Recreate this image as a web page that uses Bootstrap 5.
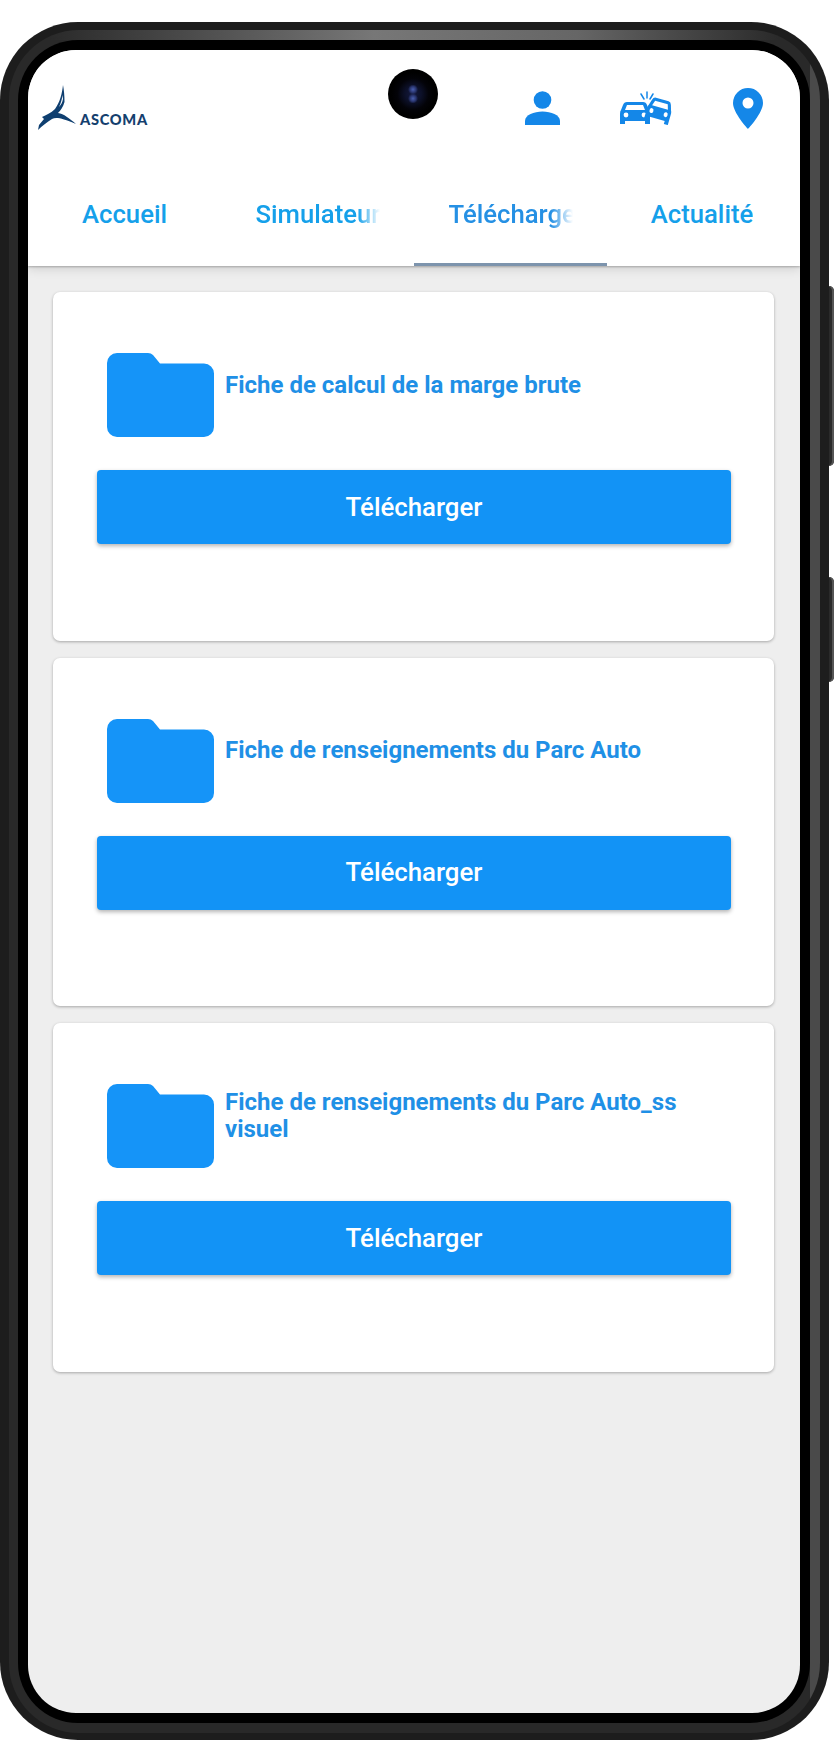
<!DOCTYPE html>
<html lang="fr">
<head>
    <meta charset="UTF-8">
    <meta name="viewport" content="width=device-width, initial-scale=1.0">
    <title>Ascoma - Téléchargements</title>
    <link href="https://cdn.jsdelivr.net/npm/bootstrap@5.3.2/dist/css/bootstrap.min.css" rel="stylesheet">
    <style>
        body { background: #fff; font-family: Roboto, "Liberation Sans", sans-serif; padding-top: 22px; }

        /* phone frame */
        .phone-shell { position: relative; width: 829px; height: 1718px; background: #1d1d1d; border-radius: 78px; padding: 8px 9px 7px 9px; }
        .phone-rim { height: 100%; border-radius: 70px; padding: 10px 10px 10px 9px;
            background: linear-gradient(90deg, #2a2a2a 5%, #777 45%, #666 70%, #2a2a2a 95%) top / 100% 10px no-repeat,
                        linear-gradient(180deg, #4a4a4a, #4a4a4a) right / 10px 100% no-repeat, #292929; }
        .phone-bezel { height: 100%; background: #000; border-radius: 60px; padding: 10px; }
        .phone-screen { height: 100%; background: #eee; border-radius: 48px; overflow: hidden; }
        .side-key { position: absolute; right: -5px; width: 5px; background: #2a2a2a; border-radius: 0 6px 6px 0; box-shadow: inset -2px 0 0 #555; }
        .key-power { top: 264px; height: 180px; }
        .key-volume { top: 555px; height: 105px; }
        .camera { position: absolute; left: 388px; top: 47px; width: 50px; height: 50px; border-radius: 50%;
            background: radial-gradient(circle at 50% 41%, #4a5fb0 0, #2a3670 3px, transparent 5px),
                        radial-gradient(circle at 50% 59%, #4a5fb0 0, #2a3670 3px, transparent 5px),
                        radial-gradient(circle, #141a40 0, #0c1028 24%, #030308 44%, #000 62%); }

        /* header */
        .app-header { position: relative; background: #fff; box-shadow: 0 1px 2px rgba(0, 0, 0, .25), 0 3px 10px rgba(0, 0, 0, .12); }
        .top-row { height: 116px; padding: 0 37px 0 10px; }
        .brand-name { font-family: Lato, "Liberation Sans", sans-serif; font-weight: 900; font-size: 14.6px; letter-spacing: .7px; color: #14406e; margin: 24px 0 0 2px; line-height: 1; }
        .tab-row { height: 100px; }
        .tab-item { flex: 1 1 0; height: 100%; padding-bottom: 2px; border-bottom: 3px solid transparent; color: #15a0ea; font-size: 25.7px; font-weight: 500; text-decoration: none; }
        .tab-item.is-current { color: #2590e4; border-bottom-color: #7d94ad; }
        .tab-label { display: inline-block; max-width: 124px; overflow: hidden; white-space: nowrap; line-height: 36px; }
        .tab-label.is-cut { -webkit-mask-image: linear-gradient(90deg, #000 82%, transparent 100%); mask-image: linear-gradient(90deg, #000 82%, transparent 100%); }
        .tab-item:last-child .tab-label { margin-right: 3px; }

        /* download cards */
        .doc-list { padding: 26px 26px 0 25px; gap: 17px; }
        .doc-card { height: 348.5px; border: 0; border-radius: 7px; box-shadow: 0 1px 3px rgba(0, 0, 0, .3); padding: 61px 43px 0 44px; }
        .doc-head { padding-left: 10px; gap: 11px; }
        .doc-folder { flex: none; display: block; }
        .doc-title { color: #1f90e6; font-size: 24px; font-weight: 700; line-height: 27px; margin: 0 30px 20px 0; }
        .doc-btn { width: 100%; height: 74px; margin-top: 33px; background: #1293f6; border: 0; border-radius: 4px; color: #fff; font-size: 25.8px; font-weight: 500; box-shadow: 0 2px 4px rgba(0, 0, 0, .3); }
        .doc-btn:hover { background: #1293f6; color: #fff; }
    </style>
</head>
<body>
    <svg width="0" height="0" class="position-absolute">
        <defs>
            <symbol id="folder" viewBox="0 0 107 84">
                <path fill="#1594f8" d="M10 0H41Q44 0 46 2L53 10.5H97A10 10 0 0 1 107 20.5V74A10 10 0 0 1 97 84H10A10 10 0 0 1 0 74V10A10 10 0 0 1 10 0Z"/>
            </symbol>
            <g id="car">
                <path fill="#1487e8" fill-rule="evenodd" d="M7 0H23Q26 0 27 3L29 8Q30 9 30 12V22H25V19H5V22H0V12Q0 9 1 8L3 3Q4 0 7 0ZM7 3 5 8H25L23 3Z"/>
                <circle cx="6" cy="13" r="2.4" fill="#fff"/>
                <circle cx="24" cy="13" r="2.4" fill="#fff"/>
            </g>
        </defs>
    </svg>

    <div class="phone-shell">
        <div class="phone-rim">
            <div class="phone-bezel">
                <div class="phone-screen d-flex flex-column">

                    <header class="app-header">
                        <div class="top-row d-flex align-items-center">
                            <div class="d-flex align-items-center">
                                <svg width="40" height="46" viewBox="0 0 40 46">
                                    <path fill="#0f3f70" fill-rule="evenodd" d="M25 0C24 9 22 17 17 24C13 28 8 30 4 32L6 34L1 40L0 45C4 41 9 37 14 34C18 32 24 33 38 39C31 33 26 29 20 28C23 25 25 22 26.500 17C26.500 11 26 5 25 0ZM24.500 10C24 14 23 18 21 22C23 20 24.500 17 25 14Z"/>
                                </svg>
                                <span class="brand-name">ASCOMA</span>
                            </div>
                            <div class="d-flex align-items-center ms-auto" style="gap:60px">
                                <svg width="35" height="34" viewBox="0 0 35 34">
                                    <circle cx="17.5" cy="9" r="8.8" fill="#1487e8"/>
                                    <path fill="#1487e8" d="M0 34V30C0 24 9 20.500 17.500 20.500S35 24 35 30V34Z"/>
                                </svg>
                                <svg width="53" height="34" viewBox="0 0 53 34">
                                    <use href="#car" x="0" y="11"/>
                                    <use href="#car" transform="translate(27 8) rotate(16 12 11) scale(.82 1.05)"/>
                                    <path stroke="#1487e8" stroke-width="1.500" stroke-linecap="round" d="M27 1V7M21 3 24 8M33 3 30 8"/>
                                </svg>
                                <svg width="30" height="41" viewBox="0 0 30 41">
                                    <path fill="#1487e8" fill-rule="evenodd" d="M15 0A15 15 0 0 1 30 15C30 25 15 41 15 41S0 25 0 15A15 15 0 0 1 15 0ZM15 9.500A5.500 5.500 0 1 0 15 20.500A5.500 5.500 0 0 0 15 9.500Z"/>
                                </svg>
                            </div>
                        </div>
                        <nav class="nav tab-row flex-nowrap">
                            <a class="tab-item d-flex align-items-center justify-content-center" href="#"><span class="tab-label">Accueil</span></a>
                            <a class="tab-item d-flex align-items-center justify-content-center" href="#"><span class="tab-label is-cut">Simulateur</span></a>
                            <a class="tab-item is-current d-flex align-items-center justify-content-center" href="#"><span class="tab-label is-cut">Télécharger</span></a>
                            <a class="tab-item d-flex align-items-center justify-content-center" href="#"><span class="tab-label">Actualité</span></a>
                        </nav>
                    </header>

                    <main class="doc-list d-flex flex-column">
                        <div class="card doc-card">
                            <div class="doc-head d-flex align-items-center">
                                <svg class="doc-folder" width="107" height="84"><use href="#folder"/></svg>
                                <p class="doc-title">Fiche de calcul de la marge brute</p>
                            </div>
                            <button type="button" class="btn doc-btn">Télécharger</button>
                        </div>
                        <div class="card doc-card">
                            <div class="doc-head d-flex align-items-center">
                                <svg class="doc-folder" width="107" height="84"><use href="#folder"/></svg>
                                <p class="doc-title">Fiche de renseignements du Parc Auto</p>
                            </div>
                            <button type="button" class="btn doc-btn">Télécharger</button>
                        </div>
                        <div class="card doc-card">
                            <div class="doc-head d-flex align-items-center">
                                <svg class="doc-folder" width="107" height="84"><use href="#folder"/></svg>
                                <p class="doc-title">Fiche de renseignements du Parc Auto_ss visuel</p>
                            </div>
                            <button type="button" class="btn doc-btn">Télécharger</button>
                        </div>
                    </main>

                </div>
            </div>
        </div>
        <span class="side-key key-power"></span>
        <span class="side-key key-volume"></span>
        <span class="camera"></span>
    </div>

    <script src="https://cdn.jsdelivr.net/npm/bootstrap@5.3.2/dist/js/bootstrap.bundle.min.js"></script>
</body>
</html>
